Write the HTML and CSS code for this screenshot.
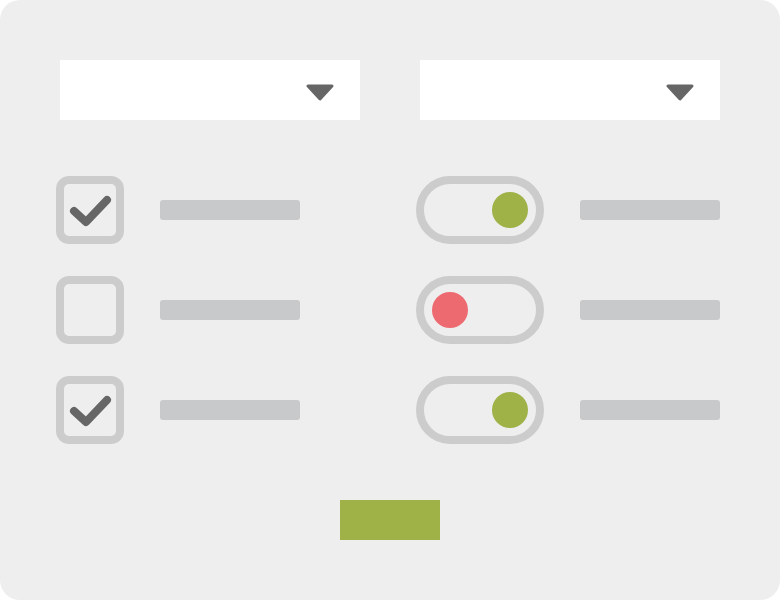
FILE: index.html
```html
<!DOCTYPE html>
<html>
<head>
<meta charset="utf-8">
<link rel="stylesheet" href="styles.css">
</head>
<body>
<div class="panel">
  <div class="selects">
    <div class="select">
      <svg class="arrow" width="28" height="17" viewBox="0 0 28 17"><polygon points="2,2 26,2 14,15" fill="#666" stroke="#666" stroke-width="3" stroke-linejoin="round"/></svg>
    </div>
    <div class="select">
      <svg class="arrow" width="28" height="17" viewBox="0 0 28 17"><polygon points="2,2 26,2 14,15" fill="#666" stroke="#666" stroke-width="3" stroke-linejoin="round"/></svg>
    </div>
  </div>
  <div class="rows">
    <div class="item">
      <div class="checkbox"><svg width="52" height="52" viewBox="0 0 52 52"><polyline points="10,27 22,38 43,16" fill="none" stroke="#666" stroke-width="8" stroke-linecap="round" stroke-linejoin="round"/></svg></div>
      <div class="label"></div>
    </div>
    <div class="item">
      <div class="toggle on"><div class="knob"></div></div>
      <div class="label"></div>
    </div>
    <div class="item">
      <div class="checkbox"></div>
      <div class="label"></div>
    </div>
    <div class="item">
      <div class="toggle off"><div class="knob"></div></div>
      <div class="label"></div>
    </div>
    <div class="item">
      <div class="checkbox"><svg width="52" height="52" viewBox="0 0 52 52"><polyline points="10,27 22,38 43,16" fill="none" stroke="#666" stroke-width="8" stroke-linecap="round" stroke-linejoin="round"/></svg></div>
      <div class="label"></div>
    </div>
    <div class="item">
      <div class="toggle on"><div class="knob"></div></div>
      <div class="label"></div>
    </div>
  </div>
  <div class="actions">
    <div class="button"></div>
  </div>
</div>
</body>
</html>
```
FILE: styles.css
```css
html, body {
  margin: 0;
  padding: 0;
  background: #ffffff;
}
.panel {
  width: 780px;
  height: 600px;
  box-sizing: border-box;
  background: #eeeeee;
  border-radius: 20px;
  padding: 60px 60px 0 60px;
}
.selects {
  display: flex;
  gap: 60px;
}
.select {
  width: 300px;
  height: 60px;
  background: #ffffff;
  display: flex;
  align-items: center;
  justify-content: flex-end;
  padding-right: 26px;
  box-sizing: border-box;
}
.arrow {
  display: block;
  margin-top: 4px;
}
.rows {
  margin: 56px -4px 0 -4px;
  display: grid;
  grid-template-columns: 360px auto;
  row-gap: 32px;
}
.item {
  display: flex;
  align-items: center;
  gap: 36px;
  height: 68px;
}
.checkbox {
  width: 68px;
  height: 68px;
  box-sizing: border-box;
  border: 8px solid #cccccc;
  border-radius: 13px;
  display: flex;
}
.checkbox svg {
  display: block;
}
.label {
  width: 140px;
  height: 20px;
  background: #c8c9ca;
  border-radius: 3px;
}
.toggle {
  width: 128px;
  height: 68px;
  box-sizing: border-box;
  border: 8px solid #cccccc;
  border-radius: 34px;
  display: flex;
  align-items: center;
  padding: 0 8px;
}
.toggle.on {
  justify-content: flex-end;
}
.toggle.off {
  justify-content: flex-start;
}
.knob {
  width: 36px;
  height: 36px;
  border-radius: 50%;
}
.toggle.on .knob {
  background: #9fb247;
}
.toggle.off .knob {
  background: #ee6a71;
}
.actions {
  display: flex;
  justify-content: center;
  margin-top: 56px;
}
.button {
  width: 100px;
  height: 40px;
  background: #9fb247;
}
```
